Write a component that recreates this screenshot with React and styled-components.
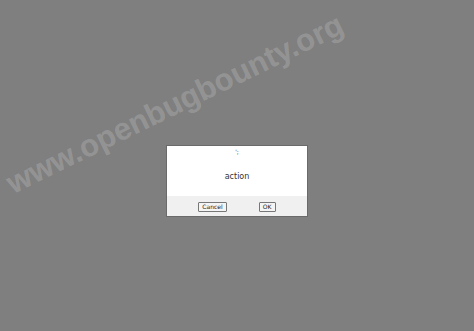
import { createGlobalStyle, styled } from 'styled-components';

const GlobalStyle = createGlobalStyle`
  html, body {
    margin: 0;
    padding: 0;
    background: #7f7f7f;
  }
  body {
    font-family: "DejaVu Sans", "Liberation Sans", sans-serif;
  }
`;

const Page = styled.div`
  position: relative;
  width: 474px;
  height: 331px;
  overflow: hidden;
  background: #7f7f7f;
  display: flex;
  justify-content: center;
  align-items: flex-start;
  padding-top: 145px;
  box-sizing: border-box;
`;

// rotated site stamp laid over the page
const Watermark = styled.div`
  position: absolute;
  left: 175px;
  top: 104px;
  transform: translate(-50%, -50%) rotate(-26deg);
  font-family: "Liberation Sans", Arial, sans-serif;
  font-weight: 700;
  font-size: 31px;
  letter-spacing: 0;
  color: rgba(255, 255, 255, 0.18);
  white-space: nowrap;
  pointer-events: none;
  z-index: 2;
`;

const Dialog = styled.div`
  width: 142px;
  background: #fff;
  border: 1px solid #6a6a6a;
  box-sizing: border-box;
  display: flex;
  flex-direction: column;
`;

const Body = styled.div`
  height: 50px;
  display: flex;
  flex-direction: column;
  align-items: center;
  color: #333;
`;

const Quote = styled.div`
  font-size: 6px;
  line-height: 8px;
  margin-top: 2px;
  color: #444;
`;

const Message = styled.div`
  font-size: 8px;
  line-height: 10px;
  margin-top: 16px;
  color: #333;
`;

const Footer = styled.div`
  height: 20px;
  background: #f0f0f0;
  display: flex;
  align-items: center;
  justify-content: center;
  gap: 32px;
  padding-top: 1px;
  box-sizing: border-box;
`;

const Button = styled.button`
  font-family: "DejaVu Sans", sans-serif;
  font-size: 6px;
  line-height: 8px;
  height: 10px;
  min-width: ${({ $wide }) => ($wide ? '28px' : '17px')};
  padding: 0 3px;
  background: #f4f4f4;
  border: 1px solid #777;
  border-radius: 1px;
  color: #222;
  box-sizing: border-box;
`;

const App = () => {
  return (
    <>
      <GlobalStyle />
      <Page>
        <Dialog>
          <Body>
            <Quote>';</Quote>
            <Message>action</Message>
          </Body>
          <Footer>
            <Button $wide>Cancel</Button>
            <Button>OK</Button>
          </Footer>
        </Dialog>
        <Watermark>www.openbugbounty.org</Watermark>
      </Page>
    </>
  );
};

export default App;
